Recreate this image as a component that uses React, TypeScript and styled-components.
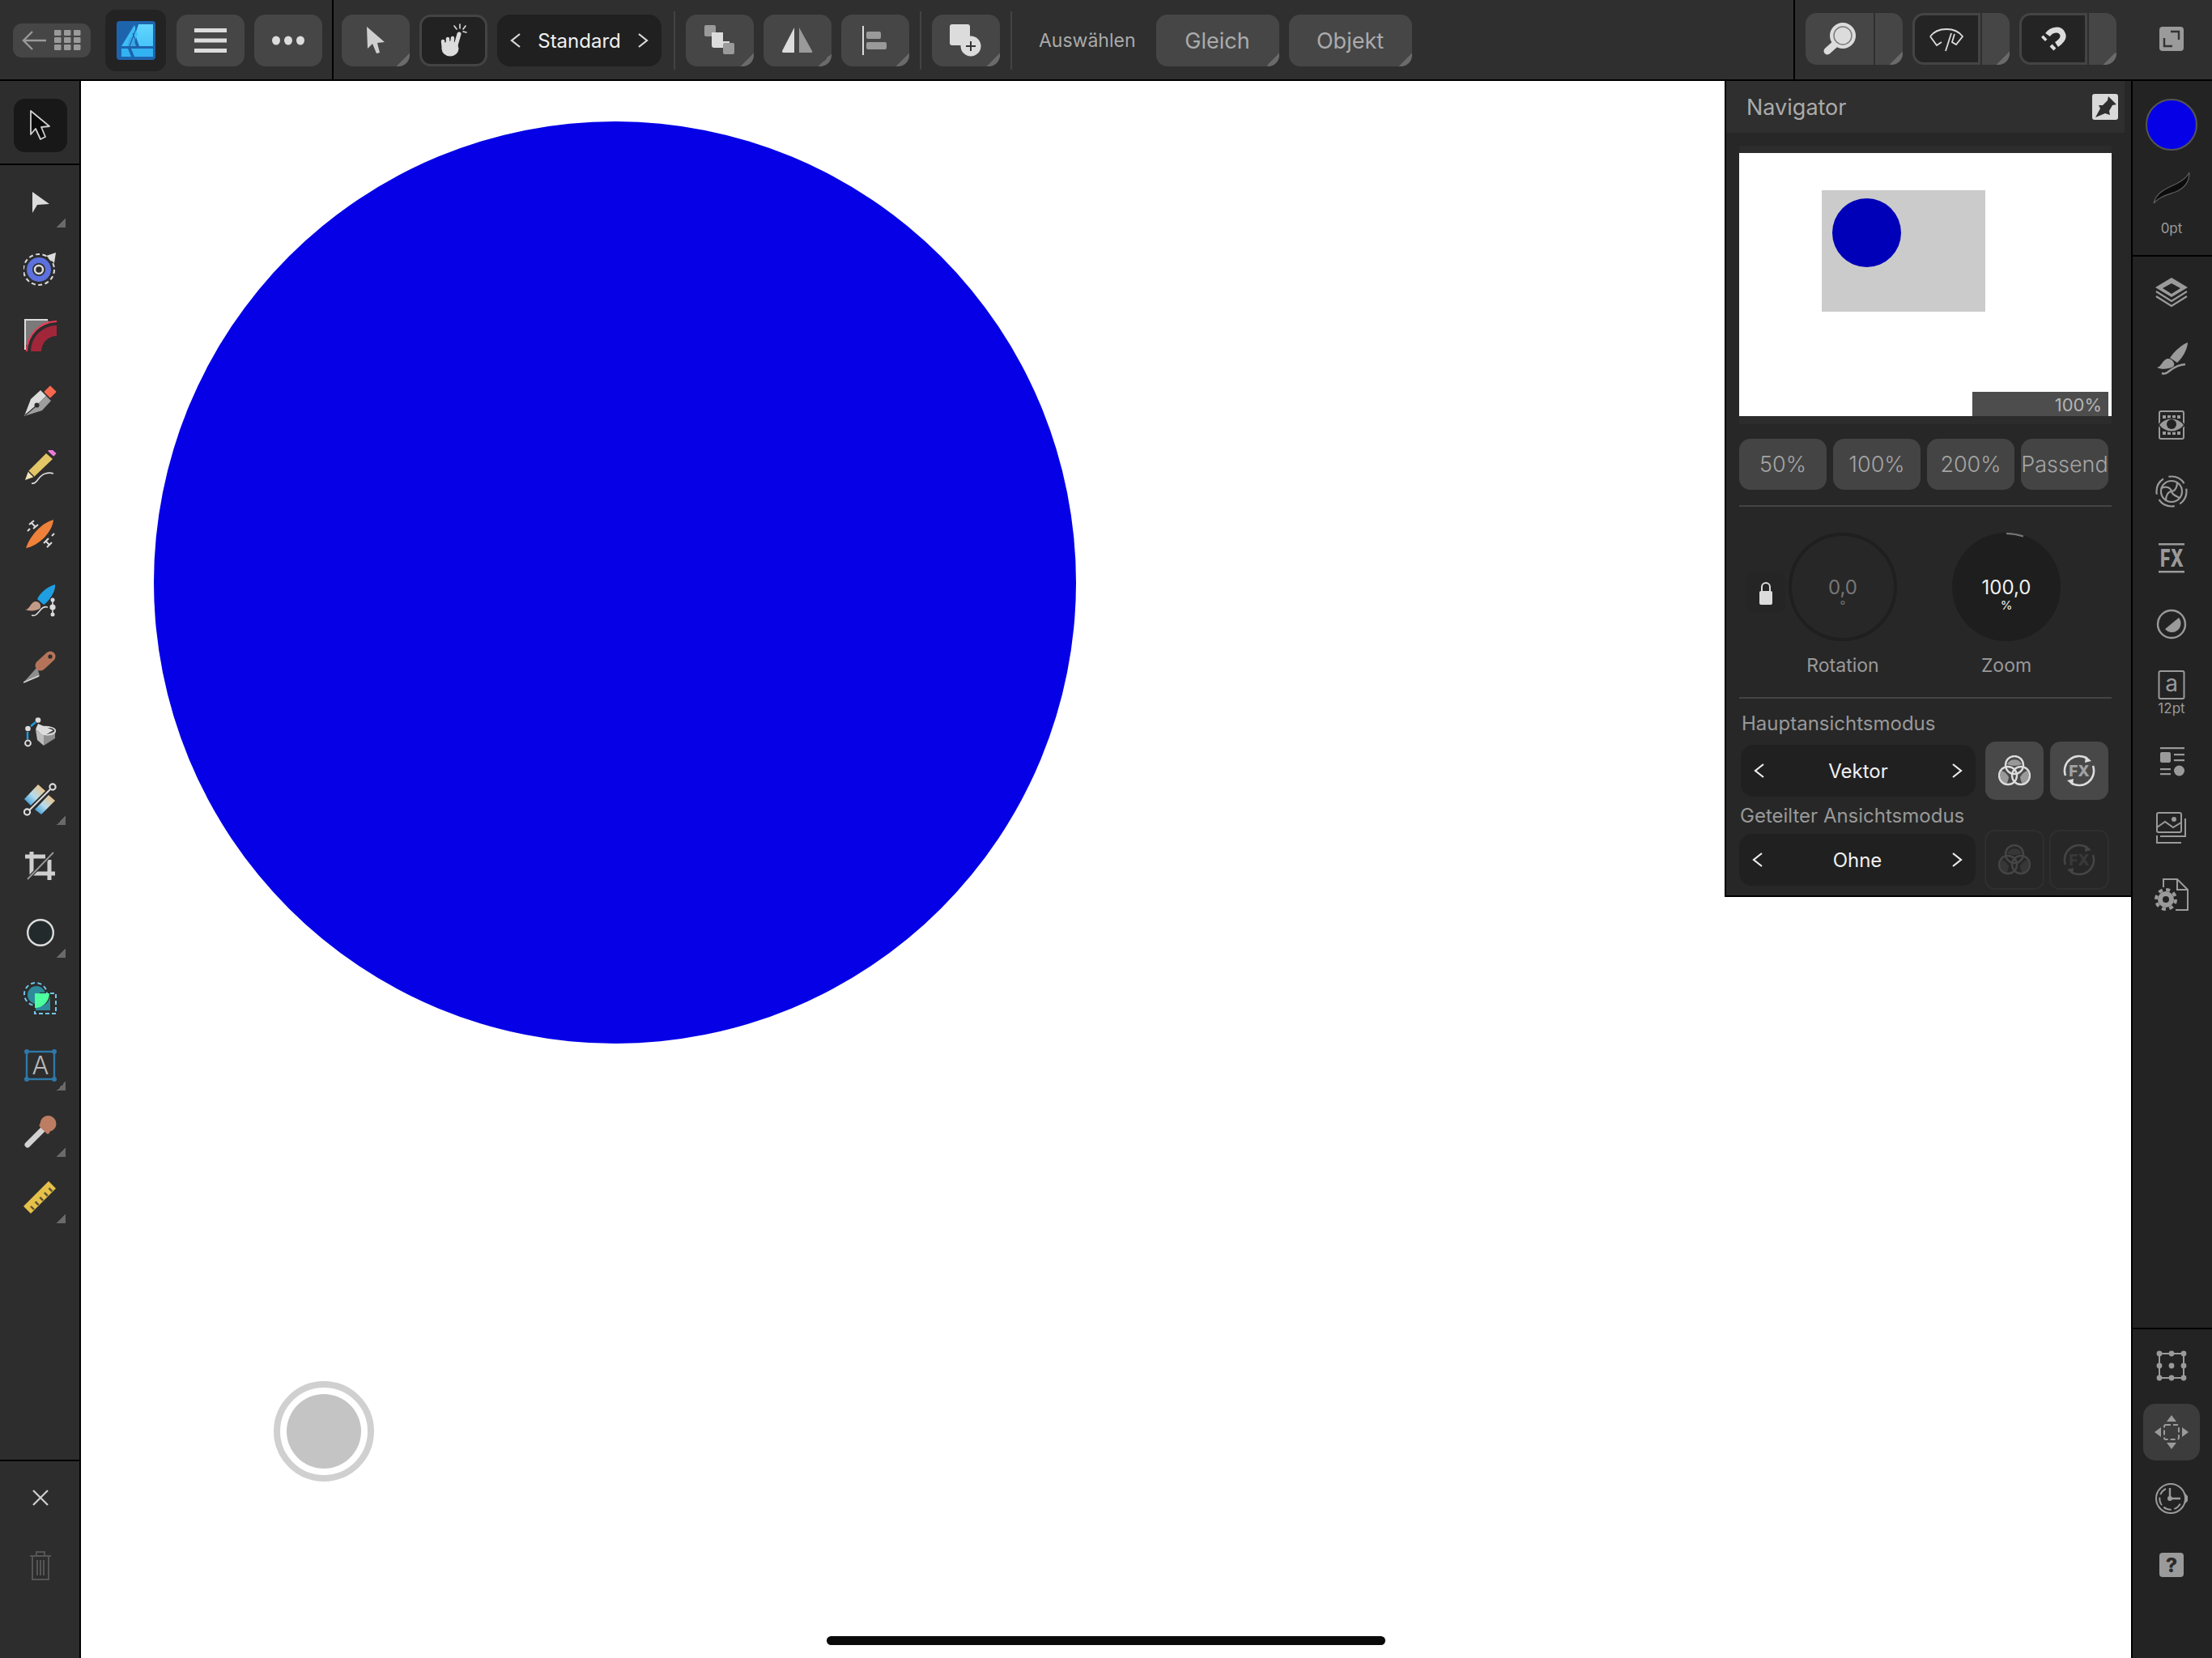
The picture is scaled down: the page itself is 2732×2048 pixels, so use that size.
import React from 'react';
import styled, { createGlobalStyle } from 'styled-components';

const GlobalStyle = createGlobalStyle`
  html, body {
    margin: 0;
    padding: 0;
    width: 2732px;
    height: 2048px;
    overflow: hidden;
    background: #fff;
    font-family: Inter, "Noto Sans", "Liberation Sans", sans-serif;
  }
  * { box-sizing: border-box; }
  svg { display: block; }
`;

const Screen = styled.div`
  display: grid;
  grid-template-columns: 100px 1fr 100px;
  grid-template-rows: 100px 1fr;
  width: 2732px;
  height: 2048px;
`;

/* top bar */
const TopBar = styled.header`
  grid-column: 1 / -1;
  display: flex;
  align-items: stretch;
  background: #2f2f2f;
  border-bottom: 2px solid #000;
`;

const BarSection = styled.div`
  display: flex;
  align-items: center;
  padding-top: 2px;
`;

const HomeGroup = styled(BarSection)`
  padding-left: 16px;
  padding-right: 12px;
  gap: 12px;
  border-right: 2px solid #000;
`;

const MainGroup = styled(BarSection)`
  padding-left: 10px;
  gap: 12px;
`;

const ViewGroup = styled(BarSection)`
  margin-left: auto;
  padding-top: 0;
  padding-bottom: 2px;
  padding-left: 13px;
  padding-right: 35px;
  gap: 12px;
  border-left: 2px solid #000;
`;

const Corner = styled.span<{ $size?: number }>`
  position: absolute;
  right: ${p => (p.$size ? 2 : 0)}px;
  bottom: ${p => (p.$size ? 2 : 0)}px;
  width: ${p => p.$size || 16}px;
  height: ${p => p.$size || 16}px;
  background: linear-gradient(135deg, transparent 50%, #6a6a6a 50%);
`;

const BarButton = styled.div<{ $wide?: boolean }>`
  position: relative;
  flex: none;
  display: flex;
  align-items: center;
  justify-content: center;
  width: ${p => (p.$wide ? 152 : 84)}px;
  height: 64px;
  border-radius: 14px;
  background: #464646;
  color: #ababab;
  font-size: 27px;
  overflow: hidden;
`;

const ToggledButton = styled(BarButton)`
  background: #222;
  border: 3px solid #444;
`;

const BackButton = styled.div`
  width: 96px;
  height: 42px;
  border-radius: 11px;
  background: #464646;
`;

const LogoCell = styled.div`
  display: flex;
  align-items: center;
  justify-content: center;
  width: 75px;
  height: 76px;
  margin: 0 1px 0 6px;
  border-radius: 13px;
  background: #232323;
`;

const Stepper = styled.div<{ $width: number; $size?: number }>`
  flex: none;
  display: flex;
  align-items: center;
  justify-content: space-between;
  width: ${p => p.$width}px;
  height: 64px;
  padding: 0 16px;
  border-radius: 16px;
  background: #202020;
  color: #f0f0f0;
  font-size: ${p => p.$size || 24}px;
`;

const BarRule = styled.div<{ $before?: number; $after?: number }>`
  flex: none;
  align-self: center;
  width: 2px;
  height: 72px;
  margin: 0 ${p => p.$after ?? 1}px 0 ${p => p.$before ?? 1}px;
  background: #434343;
`;

const Caption = styled.span`
  margin: 0 13px 0 21px;
  color: #aaa;
  font-size: 23px;
`;

const SplitButton = styled.div`
  flex: none;
  display: flex;
  gap: 2px;
  width: 120px;
  height: 64px;
`;

const SplitMain = styled.div<{ $on?: boolean }>`
  display: flex;
  align-items: center;
  justify-content: center;
  width: 84px;
  border-radius: 14px 0 0 14px;
  background: ${p => (p.$on ? '#242424' : '#464646')};
  border: ${p => (p.$on ? '3px solid #444' : 'none')};
`;

const SplitArrow = styled.div`
  position: relative;
  width: 34px;
  border-radius: 0 14px 14px 0;
  background: #464646;
  overflow: hidden;
`;

const ExpandButton = styled.div`
  display: flex;
  align-items: center;
  justify-content: center;
  width: 30px;
  height: 30px;
  margin-left: 41px;
  border-radius: 4px;
  background: #9a9a9a;
`;

/* side toolbars */
const LeftBar = styled.aside`
  display: flex;
  flex-direction: column;
  background: #2d2d2d;
  border-right: 2px solid #000;
`;

const ToolSlot = styled.div<{ $on?: boolean }>`
  position: relative;
  flex: none;
  display: flex;
  align-items: center;
  justify-content: center;
  width: 66px;
  height: 66px;
  border-radius: 14px;
  background: ${p => (p.$on ? '#181818' : 'transparent')};
`;

const ToolGroup = styled.div<{ $gap: number; $top: number }>`
  display: flex;
  flex-direction: column;
  align-items: center;
  gap: ${p => p.$gap}px;
  padding-top: ${p => p.$top}px;
  padding-left: 2px;
`;

const ActiveGroup = styled(ToolGroup)`
  padding-bottom: 14px;
  border-bottom: 2px solid #000;
`;

const ActionGroup = styled(ToolGroup)`
  margin-top: auto;
  padding-bottom: 81px;
  border-top: 2px solid #000;
`;

const RightBar = styled.aside`
  display: flex;
  flex-direction: column;
  background: #232323;
  border-left: 2px solid #000;
`;

const StyleGroup = styled.div`
  display: flex;
  flex-direction: column;
  align-items: center;
  height: 217px;
  padding: 22px 2px 0 0;
  border-bottom: 2px solid #000;
`;

const Swatch = styled.div`
  width: 64px;
  height: 64px;
  border-radius: 50%;
  background: #0500e6;
  border: 2px solid #555;
`;

const Swoosh = styled.div`
  margin-top: 26px;
`;

const SmallLabel = styled.span<{ $top?: number }>`
  margin-top: ${p => p.$top ?? 0}px;
  color: #9a9a9a;
  font-size: 17px;
  line-height: 18px;
`;

const StudioGroup = styled.div`
  display: flex;
  flex-direction: column;
  align-items: center;
  gap: 16px;
  padding: 11px 2px 0 0;
`;

const StudioSlot = styled.div<{ $tall?: boolean }>`
  display: flex;
  flex-direction: column;
  align-items: center;
  justify-content: center;
  width: 66px;
  height: ${p => (p.$tall ? 72 : 66)}px;
`;

const ModeGroup = styled.div`
  display: flex;
  flex-direction: column;
  align-items: center;
  gap: 12px;
  margin-top: auto;
  padding: 10px 2px 80px 0;
  border-top: 2px solid #000;
`;

const ModeSlot = styled.div<{ $on?: boolean }>`
  display: flex;
  align-items: center;
  justify-content: center;
  width: 70px;
  height: 70px;
  border-radius: 15px;
  background: ${p => (p.$on ? '#3c3c3c' : 'transparent')};
`;

const HelpBadge = styled.div`
  display: flex;
  align-items: center;
  justify-content: center;
  width: 30px;
  height: 30px;
  border-radius: 4px;
  background: #9a9a9a;
  color: #2a2a2a;
  font-size: 25px;
  font-weight: 800;
`;

/* canvas */
const Canvas = styled.main`
  position: relative;
  background: #fff;
  overflow: hidden;
`;

const BigCircle = styled.div`
  position: absolute;
  left: 90px;
  top: 50px;
  width: 1139px;
  height: 1139px;
  border-radius: 50%;
  background: #0500e6;
`;

const TouchRing = styled.div`
  position: absolute;
  left: 238px;
  top: 1606px;
  width: 124px;
  height: 124px;
  padding: 8px;
  border: 8px solid #d0d0d0;
  border-radius: 50%;
`;

const TouchDot = styled.div`
  width: 100%;
  height: 100%;
  border-radius: 50%;
  background: #c4c4c4;
`;

const HomeBar = styled.div`
  position: absolute;
  left: 921px;
  bottom: 16px;
  width: 690px;
  height: 11px;
  border-radius: 6px;
  background: #0a0a0a;
`;

/* navigator studio */
const Panel = styled.section`
  position: absolute;
  top: 0;
  right: 0;
  width: 502px;
  padding-bottom: 7px;
  background: #272727;
  border-left: 2px solid #000;
  border-bottom: 2px solid #000;
`;

const PanelHeader = styled.div`
  display: flex;
  align-items: center;
  justify-content: space-between;
  height: 64px;
  margin-right: 8px;
  padding: 0 8px 0 25px;
  background: #2f2f2f;
  color: #ababab;
  font-size: 27px;
`;

const PinButton = styled.div`
  width: 32px;
  height: 32px;
  border-radius: 3px;
  background: #d9d9d9;
`;

const PanelBody = styled.div`
  display: flex;
  flex-direction: column;
  padding: 16px 24px 0 16px;
`;

const PreviewFrame = styled.div`
  height: 344px;
  padding: 9px 0 10px;
  background: #2c2c2c;
`;

const PreviewPage = styled.div`
  position: relative;
  height: 100%;
  background: #fff;
`;

const PreviewDoc = styled.div`
  position: absolute;
  left: 102px;
  top: 46px;
  width: 202px;
  height: 150px;
  background: #cbcbcb;
`;

const PreviewDisc = styled.div`
  position: absolute;
  left: 13px;
  top: 10px;
  width: 85px;
  height: 85px;
  border-radius: 50%;
  background: #0000b8;
`;

const ZoomTag = styled.div`
  position: absolute;
  right: 4px;
  bottom: 0;
  width: 168px;
  height: 30px;
  padding-right: 8px;
  background: #4d4d4d;
  color: #b4b4b4;
  font-size: 22px;
  line-height: 32px;
  text-align: right;
`;

const PresetRow = styled.div`
  display: grid;
  grid-template-columns: repeat(4, 108px);
  gap: 8px;
  margin-top: 18px;
`;

const Preset = styled.div`
  display: flex;
  align-items: center;
  justify-content: center;
  height: 63px;
  border-radius: 14px;
  background: #444;
  color: #a4a4a4;
  font-size: 27px;
  font-weight: 300;
  white-space: nowrap;
`;

const Rule = styled.div<{ $top: number }>`
  height: 2px;
  margin-top: ${p => p.$top}px;
  background: #444;
`;

const DialRow = styled.div`
  display: flex;
  align-items: flex-start;
  margin-top: 32px;
  padding-left: 8px;
`;

const LockButton = styled.div`
  display: flex;
  align-items: center;
  justify-content: center;
  width: 49px;
  height: 50px;
  margin: 49px 4px 0 0;
  border-radius: 10px;
  background: #252525;
`;

const DialColumn = styled.div<{ $after?: number }>`
  display: flex;
  flex-direction: column;
  align-items: center;
  width: 134px;
  margin-right: ${p => p.$after || 0}px;
`;

const Dial = styled.div<{ $filled?: boolean }>`
  position: relative;
  display: flex;
  flex-direction: column;
  align-items: center;
  width: 134px;
  height: 134px;
  padding-top: ${p => (p.$filled ? 53 : 49)}px;
  border-radius: 50%;
  background: ${p => (p.$filled ? '#1e1e1e' : 'transparent')};
  border: ${p => (p.$filled ? 'none' : '4px solid #1f1f1f')};
  color: ${p => (p.$filled ? '#f0f0f0' : '#777')};
  font-size: 24px;
  line-height: 30px;
`;

const DialUnit = styled.span`
  font-size: 15px;
  line-height: 14px;
`;

const DialArc = styled.svg`
  position: absolute;
  inset: 0;
`;

const DialLabel = styled.span`
  margin-top: 16px;
  color: #999;
  font-size: 23px;
  line-height: 28px;
`;

const ModeLabel = styled.div<{ $left: number; $top: number }>`
  margin: ${p => p.$top}px 0 0 ${p => p.$left}px;
  color: #999;
  font-size: 24px;
  line-height: 30px;
`;

const ModeRow = styled.div<{ $top: number; $left?: number; $gap: number }>`
  display: flex;
  align-items: center;
  gap: ${p => p.$gap}px;
  margin-top: ${p => p.$top}px;
  padding-left: ${p => p.$left || 0}px;
`;

const ModeStepper = styled.div<{ $after: number }>`
  flex: none;
  margin-right: ${p => p.$after}px;
`;

const ModeToggle = styled.div<{ $off?: boolean }>`
  flex: none;
  display: flex;
  align-items: center;
  justify-content: center;
  width: ${p => (p.$off ? 74 : 72)}px;
  height: ${p => (p.$off ? 74 : 72)}px;
  border-radius: 13px;
  background: ${p => (p.$off ? 'transparent' : '#484848')};
  border: ${p => (p.$off ? '2px solid #2f2f2f' : 'none')};
  color: ${p => (p.$off ? '#454545' : '#dcdcdc')};
`;

/* drawings */
const G = '#9a9a9a';
const L = '#dcdcdc';

const Chevron = ({ left, color = '#dcdcdc' }: { left?: boolean; color?: string }) => (
  <svg width="14" height="20" viewBox="0 0 14 20" fill="none" stroke={color} strokeWidth="2.2">
    <path d={left ? 'M12 2 L2 10 L12 18' : 'M2 2 L12 10 L2 18'} />
  </svg>
);

const BackIcon = () => (
  <svg width="96" height="42" viewBox="0 0 96 42" fill="none">
    <path d="M41 21 H14 M24 10 L13 21 L24 32" stroke={G} strokeWidth="2.4" />
    {[0, 1, 2].map(r =>
      [0, 1, 2].map(c => <rect key={`${r}${c}`} x={51 + c * 12} y={8 + r * 9} width="8.5" height="7" rx="1" fill={G} />)
    )}
  </svg>
);

const AffinityLogo = () => (
  <svg width="48" height="48" viewBox="0 0 48 48">
    <defs>
      <linearGradient id="afTop" x1="0" y1="0" x2="0" y2="1">
        <stop offset="0" stopColor="#63d6fd" />
        <stop offset="1" stopColor="#48c4fa" />
      </linearGradient>
    </defs>
    <rect width="48" height="48" rx="4" fill="#1e64ad" />
    <polygon points="27,4 45,4 45,31 28,31 23,17" fill="url(#afTop)" />
    <polygon points="22,5 26,16 20,31 6,31" fill="#3dbdf5" />
    <polygon points="16,22 20,18 24,31 13,31" fill="#3aa7e6" />
    <polygon points="18,34 45,34 45,44 22,44" fill="#33b2f2" />
    <polygon points="6,34 14,34 18,44 6,44" fill="#33b2f2" />
    <path d="M26 4 L16 31 M20 15 L26 31" stroke="#1e64ad" strokeWidth="1.2" fill="none" />
  </svg>
);

const MenuIcon = () => (
  <svg width="40" height="30" viewBox="0 0 40 30" fill={L}>
    <rect y="0" width="40" height="5" />
    <rect y="12.5" width="40" height="5" />
    <rect y="25" width="40" height="5" />
  </svg>
);

const DotsIcon = () => (
  <svg width="40" height="12" viewBox="0 0 40 12" fill={L}>
    <ellipse cx="5" cy="6" rx="5" ry="5.5" />
    <ellipse cx="20" cy="6" rx="5" ry="5.5" />
    <ellipse cx="35" cy="6" rx="5" ry="5.5" />
  </svg>
);

const CursorIcon = () => (
  <svg width="24" height="34" viewBox="0 0 24 34" fill="#cfcfcf">
    <polygon points="1,0 23,19 14,20 17,32 13,33 8,21 2,27" />
  </svg>
);

const TouchIcon = () => (
  <svg width="38" height="42" viewBox="0 0 38 42" fill="none" stroke={L} strokeLinecap="round">
    <path d="M26 13 L22 27" strokeWidth="5" />
    <path d="M18 18 L17 28 M12 19 L12 29 M6 22 L7 31" strokeWidth="4.5" />
    <ellipse cx="15" cy="31" rx="10.5" ry="9.5" fill={L} stroke="none" />
    <path d="M27 1 L27 6 M20 3 L23 7 M34 3 L31 7 M35 11 L31 10" strokeWidth="1.6" />
  </svg>
);

const OrderIcon = () => (
  <svg width="38" height="38" viewBox="0 0 38 38">
    <rect x="0" y="0" width="14" height="14" rx="2" fill={G} />
    <path d="M9 9 H23 V20 H31 V28 H12 Q9 28 9 25Z" fill={L} />
    <rect x="23" y="22" width="14" height="14" rx="2" fill={G} />
  </svg>
);

const FlipIcon = () => (
  <svg width="38" height="32" viewBox="0 0 38 32">
    <path d="M15 0 V31 H1 Q0 31 0 29Z" fill={L} />
    <path d="M21 0 V31 H36 Q38 31 37 29Z" fill={G} />
  </svg>
);

const AlignIcon = () => (
  <svg width="32" height="36" viewBox="0 0 32 36">
    <rect x="0" y="0" width="2" height="36" fill={L} />
    <rect x="5" y="7" width="18" height="9" rx="2" fill={G} />
    <rect x="5" y="20" width="25" height="9" rx="2" fill={G} />
  </svg>
);

const AddShapeIcon = () => (
  <svg width="40" height="40" viewBox="0 0 40 40">
    <rect x="0" y="0" width="25" height="26" rx="3" fill={L} />
    <circle cx="26" cy="27" r="12.5" fill={L} />
    <path d="M26 21 V33 M20 27 H32" stroke="#333" strokeWidth="2" />
  </svg>
);

const LensIcon = () => (
  <svg width="42" height="42" viewBox="0 0 42 42">
    <path d="M6 36 L16 27" stroke={L} strokeWidth="9" strokeLinecap="round" />
    <circle cx="25" cy="17" r="16" fill={L} />
    <circle cx="25" cy="17" r="11" fill={L} stroke="#7c7c7c" strokeWidth="1.5" />
  </svg>
);

const WiperIcon = () => (
  <svg width="42" height="32" viewBox="0 0 42 32" fill="none" stroke={L} strokeWidth="1.8">
    <path d="M1 13 C10 1 32 1 41 13 L33 23 L28 20 L31 10 M15 20 L9 24 L1 13" />
    <path d="M20 31 L27 9" />
  </svg>
);

const MagnetIcon = () => (
  <svg width="32" height="32" viewBox="0 0 32 32" fill="none" stroke={L} strokeWidth="7">
    <path d="M9 11 C14 4 24 3 27 9 C30 14 26 19 20 23" />
    <path d="M3.5 16.5 L6 14 M14 28 L17 25" />
  </svg>
);

const ExpandIcon = () => (
  <svg width="22" height="22" viewBox="0 0 22 22" fill="none" stroke="#333" strokeWidth="2.4">
    <path d="M10 2 H20 V12 M2 10 V20 H12" />
  </svg>
);

const PinIcon = () => (
  <svg width="32" height="32" viewBox="0 0 32 32" fill="#2e2e2e">
    <path d="M20 3 L30 13 L25 14 L21 21 L22 26 L16 24 L4 29 L10 18 L8 14 L13 14 L19 8Z" />
  </svg>
);

const LockIcon = () => (
  <svg width="16" height="29" viewBox="0 0 16 29">
    <path d="M3 13 V7 A5 5 0 0 1 13 7 V13" fill="none" stroke={L} strokeWidth="2" />
    <rect y="12" width="16" height="17" rx="2" fill={L} />
  </svg>
);

const ChannelsIcon = () => (
  <svg width="40" height="38" viewBox="0 0 40 38" fill="none" stroke="currentColor" strokeWidth="2.4">
    <path d="M11 11 A10 10 0 0 1 29 11 Q20 15 11 11Z" fill="currentColor" opacity="0.55" stroke="none" />
    <path d="M4 19 Q10 21 13 27 Q12 33 10 35 Q2 33 2 26Z" fill="currentColor" opacity="0.55" stroke="none" />
    <path d="M36 19 Q30 21 27 27 Q28 33 30 35 Q38 33 38 26Z" fill="currentColor" opacity="0.55" stroke="none" />
    <circle cx="20" cy="12" r="11" />
    <circle cx="12" cy="25" r="11" />
    <circle cx="28" cy="25" r="11" />
  </svg>
);

const FxRoundIcon = () => (
  <svg width="40" height="40" viewBox="0 0 40 40" fill="none" stroke="currentColor" strokeWidth="2.6">
    <path d="M30 5 A18 18 0 0 0 3 26 M10 35 A18 18 0 0 0 37 14" />
    <polygon points="28,2 35,8 27,10" fill="currentColor" stroke="none" />
    <polygon points="12,38 5,32 13,30" fill="currentColor" stroke="none" />
    <text x="20" y="27" textAnchor="middle" fontFamily="Inter, sans-serif" fontWeight="800" fontSize="19" fill="currentColor" stroke="none" opacity="0.6">FX</text>
  </svg>
);

const SwooshIcon = () => (
  <svg width="46" height="40" viewBox="0 0 46 40">
    <path d="M1 39 C4 26 16 21 29 15 C37 11 42 7 45 1 C45 13 38 21 28 25 C17 29 8 31 1 39Z" fill="#0c0c0c" stroke="#5e5e5e" strokeWidth="1.2" />
  </svg>
);

const ArrowTool = () => (
  <svg width="30" height="40" viewBox="0 0 30 40">
    <polygon points="3,2 26,21 16,22 21,34 15,37 9,24 3,31" fill="#0a0a0a" stroke="#cfcfcf" strokeWidth="1.8" strokeLinejoin="round" />
  </svg>
);

const MoveTool = () => (
  <svg width="40" height="40" viewBox="0 0 40 40">
    <polygon points="10,7 31,22 16,23 10,33" fill={L} />
  </svg>
);

const NodeTool = () => (
  <svg width="42" height="42" viewBox="0 0 42 42" fill="none">
    <circle cx="19" cy="22" r="19" stroke={L} strokeWidth="2" strokeDasharray="5 3.5" />
    <circle cx="19" cy="22" r="15" fill="#5c71de" />
    <circle cx="19" cy="22" r="8" fill="#2d2d2d" />
    <circle cx="19" cy="22" r="5" stroke={L} strokeWidth="2.5" />
    <polygon points="28,5 40,1 38,14" fill={L} />
  </svg>
);

const CornerTool = () => (
  <svg width="40" height="40" viewBox="0 0 40 40">
    <path d="M1 38 V1 H29" fill="none" stroke={L} strokeWidth="2" />
    <rect x="2" y="2" width="28" height="30" fill="#7a7a7a" />
    <path d="M4 40 A36 36 0 0 1 40 4 V40Z" fill="#2d2d2d" />
    <path d="M8 40 A32 32 0 0 1 40 8 V21 A19 19 0 0 0 21 40Z" fill="#a2263a" />
    <path d="M3 40 A37 37 0 0 1 40 3" fill="none" stroke="#f03a55" strokeWidth="2" />
  </svg>
);

const PenTool = () => (
  <svg width="40" height="40" viewBox="0 0 40 40">
    <polygon points="0,38 8,17 20,6 27,13 15,25" fill="#dcdcdc" />
    <polygon points="0,38 15,25 27,13 33,19 22,31" fill="#9d9d9d" />
    <rect x="26.5" y="2.5" width="11" height="11" rx="1" transform="rotate(45 32 8)" fill="#f5684e" />
    <path d="M1 37 L15 25" stroke="#2d2d2d" strokeWidth="1.2" />
    <circle cx="15.5" cy="24.5" r="3" fill="#2d2d2d" />
  </svg>
);

const PencilTool = () => (
  <svg width="40" height="44" viewBox="0 0 40 44" fill="none">
    <polygon points="27,4 35,11 12,33 5,26" fill="#e3c766" />
    <polygon points="5,26 12,33 1,37" fill="#f3e3b5" />
    <path d="M5 26 L12 33" stroke="#2d2d2d" strokeWidth="1.5" />
    <rect x="29" y="0" width="10" height="5" rx="1" transform="rotate(42 34 3)" fill="#ec7bd8" />
    <path d="M9 41 C16 43 17 31 26 29 C29 28 33 28 36 29" stroke={L} strokeWidth="1.6" />
  </svg>
);

const VectorBrushTool = () => (
  <svg width="38" height="36" viewBox="0 0 38 36" fill="none" stroke={L} strokeWidth="2">
    <path d="M35 0 C34 14 18 32 1 35 C6 20 20 4 35 0Z" fill="#f0813a" stroke="none" />
    <path d="M8 4 L13 9 M5 6 L11 1 M10 11 L16 6 M3 14 L6 11" />
    <path d="M26 27 L30 31 M23 29 L29 23 M27 34 L33 28 M33 20 L36 17" />
  </svg>
);

const PaintBrushTool = () => (
  <svg width="40" height="42" viewBox="0 0 40 42" fill="none">
    <path d="M38 1 C39 10 30 22 24 26 L16 19 C20 10 30 3 38 1Z" fill="#1f9fe2" />
    <path d="M1 32 C7 32 7 24 13 22 C19 21 22 27 19 31 C14 34 6 34 1 32Z" fill="#c49a86" />
    <path d="M9 39 C18 42 19 26 29 29" stroke={L} strokeWidth="1.6" />
    <path d="M35 20 V38" stroke={L} strokeWidth="1.6" />
    <circle cx="35" cy="20" r="2.5" fill={L} />
    <circle cx="35" cy="29" r="3.6" fill={L} />
    <circle cx="35" cy="38" r="2.5" fill={L} />
  </svg>
);

const KnifeTool = () => (
  <svg width="42" height="42" viewBox="0 0 42 42" fill="none">
    <polygon points="0,40 17,21 20,32" fill="#8d8d8d" />
    <path d="M0 40 L19 32" stroke={L} strokeWidth="1.5" />
    <path d="M33 8 L21 19" stroke="#b5745a" strokeWidth="13" strokeLinecap="round" />
    <circle cx="33" cy="8" r="2.6" fill="#2d2d2d" />
  </svg>
);

const BucketTool = () => (
  <svg width="40" height="40" viewBox="0 0 40 40" fill="none">
    <path d="M4 18 V27 M8 11 L14 6" stroke="#1f9fe2" strokeWidth="2.4" />
    <polygon points="17,8 36,16 24,23 14,15" fill={L} />
    <polygon points="14,15 24,23 24,35 16,28" fill="#bcbcbc" />
    <polygon points="24,23 38,17 38,26 24,35" fill="#8f8f8f" />
    <path d="M15 13 C30 10 40 13 38 18 C36 22 25 23 20 19" stroke={L} strokeWidth="1.8" />
    <circle cx="17" cy="3.5" r="3.3" fill={L} />
    <circle cx="4.5" cy="14" r="3.3" fill={L} />
    <circle cx="4.5" cy="32" r="3.4" stroke={L} strokeWidth="2" />
  </svg>
);

const GradientTool = () => (
  <svg width="42" height="42" viewBox="0 0 42 42" fill="none">
    <defs>
      <linearGradient id="gradFill" x1="1" y1="0" x2="0" y2="1">
        <stop offset="0.15" stopColor="#e7c48f" />
        <stop offset="0.55" stopColor="#b6dcee" />
        <stop offset="0.9" stopColor="#3f9dd6" />
      </linearGradient>
    </defs>
    <polygon points="1,20 18,2 27,10 9,28" fill="url(#gradFill)" />
    <polygon points="14,33 31,15 39,22 22,39" fill="url(#gradFill)" />
    <path d="M7 34 L33 8" stroke="#2d2d2d" strokeWidth="5" />
    <path d="M7 34 L33 8" stroke={L} strokeWidth="2" />
    <circle cx="36" cy="5" r="3.6" fill="#2d2d2d" stroke={L} strokeWidth="2.2" />
    <circle cx="4.5" cy="36" r="3.6" fill="#2d2d2d" stroke={L} strokeWidth="2.2" />
  </svg>
);

const CropTool = () => (
  <svg width="38" height="38" viewBox="0 0 38 38" fill="none">
    <path d="M0 7 H25 M8 1 V30 M30 11 V36 M8 28 H37" stroke="#cfcfcf" strokeWidth="5" />
    <path d="M3 35 L35 2" stroke="#2d2d2d" strokeWidth="4" />
    <path d="M3 35 L35 2" stroke="#9a9a9a" strokeWidth="1.8" />
  </svg>
);

const EllipseTool = () => (
  <svg width="36" height="36" viewBox="0 0 36 36">
    <circle cx="18" cy="18" r="15.8" fill="#232a2c" stroke={L} strokeWidth="2.4" />
  </svg>
);

const ShapeBuilderTool = () => (
  <svg width="42" height="42" viewBox="0 0 42 42" fill="none">
    <circle cx="16" cy="16" r="11" fill="#2d8b9b" />
    <path d="M20 13 H37 V37 H15Z" fill="#2d2d2d" />
    <path d="M33 17 V35 H15 V31 C24 31 32 26 33 17Z" fill="#2d8b9b" />
    <circle cx="15" cy="15" r="14" stroke="#70c6ea" strokeWidth="2" strokeDasharray="5 3.5" />
    <path d="M33 14 H40 V39 H14 V33" stroke="#70c6ea" strokeWidth="2" strokeDasharray="5 3" />
    <path d="M14 14 H32 A18 18 0 0 1 14 32Z" fill="#4dff9e" />
  </svg>
);

const TextFrameTool = () => (
  <svg width="40" height="40" viewBox="0 0 40 40" fill="none">
    <rect x="3" y="3" width="34" height="34" stroke="#2f78a8" strokeWidth="2.4" />
    {[[3, 3], [37, 3], [3, 37], [37, 37]].map(([x, y]) => (
      <circle key={`${x}${y}`} cx={x} cy={y} r="3" fill="#2f78a8" />
    ))}
    <text x="20" y="31" textAnchor="middle" fontFamily="Inter, sans-serif" fontWeight="300" fontSize="31" fill="#b9b9b9">A</text>
  </svg>
);

const DropperTool = () => (
  <svg width="42" height="42" viewBox="0 0 42 42" fill="none">
    <path d="M5 37 L24 18" stroke="#d2d2d2" strokeWidth="7" strokeLinecap="round" />
    <path d="M22 13 L30 21" stroke="#bd7d62" strokeWidth="5" strokeLinecap="round" />
    <circle cx="30.5" cy="11" r="10" fill="#bd7d62" />
  </svg>
);

const RulerTool = () => (
  <svg width="42" height="44" viewBox="0 0 42 44">
    <polygon points="0,32 31,1 40,10 9,41" fill="#e5c14a" strokeLinejoin="round" />
    {[0, 1, 2, 3, 4].map(i => (
      <path key={i} d={`M${9 + i * 5.6} ${32 - i * 5.6} l4 4`} stroke="#5a5232" strokeWidth="2.4" />
    ))}
  </svg>
);

const CloseIcon = () => (
  <svg width="22" height="22" viewBox="0 0 22 22" stroke="#cfcfcf" strokeWidth="2.2">
    <path d="M2 2 L20 20 M20 2 L2 20" />
  </svg>
);

const TrashIcon = () => (
  <svg width="28" height="38" viewBox="0 0 28 38" fill="none" stroke="#555" strokeWidth="2">
    <path d="M1 7 H27 M9 7 V2 H19 V7 M4 7 V36 H24 V7 M10 12 V31 M14 12 V31 M18 12 V31" />
  </svg>
);

const LayersIcon = () => (
  <svg width="40" height="40" viewBox="0 0 40 40" fill="none" stroke={G} strokeWidth="2.2">
    <path d="M20 2 L40 14 L20 26 L0 14Z" fill={G} stroke="none" />
    <path d="M20 9 L31 15 L20 22 L9 15Z" fill="#232323" stroke="none" />
    <path d="M1 19 L20 31 L39 19 M1 25 L20 37 L39 25" />
  </svg>
);

const BrushStudioIcon = () => (
  <svg width="40" height="40" viewBox="0 0 40 40" fill="none">
    <path d="M40 0 C40 8 33 20 27 25 L18 19 C24 10 34 2 40 0Z" fill={G} />
    <path d="M2 31 C8 30 8 22 15 20 C20 19 26 26 22 30 C16 33 8 34 2 31Z" fill={G} />
    <path d="M8 38 C17 41 19 28 37 27" stroke={G} strokeWidth="2.6" />
  </svg>
);

const MaskIcon = () => (
  <svg width="40" height="40" viewBox="0 0 40 40" fill="none">
    <rect x="5" y="3" width="30" height="34" rx="2" stroke={G} strokeWidth="2" />
    <path d="M9 10 H31 M9 30 H31" stroke={G} strokeWidth="4" strokeDasharray="4 2" />
    <path d="M4 20 C12 9 28 9 36 20 C28 31 12 31 4 20Z" fill={G} stroke="#232323" strokeWidth="1.5" />
    <circle cx="20" cy="19" r="6" fill="#232323" />
  </svg>
);

const ToneIcon = () => (
  <svg width="40" height="40" viewBox="0 0 40 40" fill="none" stroke={G} strokeWidth="2.2">
    <circle cx="20" cy="20" r="18.5" strokeDasharray="22 7" strokeDashoffset="4" />
    <circle cx="20" cy="20" r="13" />
    <path d="M7.5 16 C13 13 19 15 20 20 C21 25 27 26 30 28 M27 9 C27 15 24 20 20 20 C16 20 13 25 13 31" />
  </svg>
);

const FxIcon = () => (
  <svg width="40" height="40" viewBox="0 0 40 40">
    <rect x="4" y="2" width="32" height="2.5" fill={G} />
    <rect x="4" y="36" width="32" height="2.5" fill={G} />
    <text x="6" y="31" fontFamily="Inter, sans-serif" fontWeight="800" fontSize="30" textLength="29" lengthAdjust="spacingAndGlyphs" fill={G}>FX</text>
  </svg>
);

const AdjustIcon = () => (
  <svg width="40" height="40" viewBox="0 0 40 40" fill="none">
    <circle cx="20" cy="20" r="17" stroke={G} strokeWidth="2.4" />
    <path d="M12 26 L29 12 A11 11 0 0 1 12 26Z" fill={G} />
  </svg>
);

const TextBoxIcon = () => (
  <svg width="34" height="36" viewBox="0 0 34 36" fill="none">
    <rect x="1.5" y="1" width="31" height="34" rx="2" stroke={G} strokeWidth="2" />
    <text x="17" y="26" textAnchor="middle" fontFamily="Inter, sans-serif" fontSize="28" fill={G}>a</text>
  </svg>
);

const AssetsIcon = () => (
  <svg width="40" height="36" viewBox="0 0 40 36" fill={G}>
    <rect x="6" y="0" width="30" height="2.2" />
    <rect x="6" y="6" width="13" height="13" rx="2" />
    <rect x="23" y="8" width="13" height="2.2" />
    <rect x="23" y="15" width="13" height="2.2" />
    <rect x="6" y="26" width="13" height="2.2" />
    <rect x="6" y="32" width="13" height="2.2" />
    <circle cx="29.5" cy="29" r="6.5" />
  </svg>
);

const StockIcon = () => (
  <svg width="40" height="40" viewBox="0 0 40 40" fill="none" stroke={G} strokeWidth="2">
    <rect x="2" y="1" width="30" height="24" rx="2" />
    <path d="M2 19 L12 12 L22 19 L32 13" />
    <circle cx="23" cy="9" r="3" fill={G} stroke="none" />
    <path d="M37 8 V30 H6 M2 29 V38 H32" />
  </svg>
);

const DocGearIcon = () => (
  <svg width="42" height="42" viewBox="0 0 42 42" fill="none" stroke={G} strokeWidth="2">
    <path d="M11 12 V2 H28 L41 15 V40 H26 M28 2 V15 H41" />
    <circle cx="14" cy="27" r="7" strokeWidth="6" />
    <circle cx="14" cy="27" r="12" strokeWidth="4" strokeDasharray="5 4.4" />
  </svg>
);

const TransformIcon = () => (
  <svg width="38" height="38" viewBox="0 0 38 38" fill={G}>
    <rect x="4" y="4" width="30" height="30" fill="none" stroke={G} strokeWidth="2" />
    {[4, 19, 34].map(y =>
      [4, 19, 34].map(x => <circle key={`${x}${y}`} cx={x} cy={y} r="3.4" />)
    )}
  </svg>
);

const MoveModeIcon = () => (
  <svg width="42" height="42" viewBox="0 0 42 42" fill={G}>
    <polygon points="21,0 27,8 15,8" />
    <polygon points="21,42 27,34 15,34" />
    <polygon points="0,21 8,15 8,27" />
    <polygon points="42,21 34,15 34,27" />
    <rect x="12" y="12" width="18" height="18" rx="2" fill="none" stroke={G} strokeWidth="2" strokeDasharray="6 3" />
  </svg>
);

const HistoryIcon = () => (
  <svg width="40" height="40" viewBox="0 0 40 40" fill="none" stroke={G}>
    <circle cx="19" cy="20" r="18" strokeWidth="2" />
    <path d="M13 8 A13.5 13.5 0 1 0 31 26" strokeWidth="2" strokeDasharray="10 3.5" />
    <path d="M18 7 V20 H31" strokeWidth="2.4" />
    <circle cx="18" cy="20" r="3" fill={G} stroke="none" />
    <path d="M37 14 L40 17 V23 L37 26Z" fill={G} stroke="none" />
  </svg>
);

const tools: { icon: React.ReactNode; corner?: boolean }[] = [
  { icon: <MoveTool />, corner: true },
  { icon: <NodeTool /> },
  { icon: <CornerTool /> },
  { icon: <PenTool /> },
  { icon: <PencilTool /> },
  { icon: <VectorBrushTool /> },
  { icon: <PaintBrushTool /> },
  { icon: <KnifeTool /> },
  { icon: <BucketTool /> },
  { icon: <GradientTool />, corner: true },
  { icon: <CropTool /> },
  { icon: <EllipseTool />, corner: true },
  { icon: <ShapeBuilderTool /> },
  { icon: <TextFrameTool />, corner: true },
  { icon: <DropperTool />, corner: true },
  { icon: <RulerTool />, corner: true },
];

const App = () => (
  <Screen>
    <GlobalStyle />
    <TopBar>
      <HomeGroup>
        <BackButton><BackIcon /></BackButton>
        <LogoCell><AffinityLogo /></LogoCell>
        <BarButton><MenuIcon /></BarButton>
        <BarButton><DotsIcon /></BarButton>
      </HomeGroup>
      <MainGroup>
        <BarButton><CursorIcon /><Corner /></BarButton>
        <ToggledButton><TouchIcon /></ToggledButton>
        <Stepper $width={203}>
          <Chevron left />
          <span>Standard</span>
          <Chevron />
        </Stepper>
        <BarRule $before={3} />
        <BarButton><OrderIcon /><Corner /></BarButton>
        <BarButton><FlipIcon /><Corner /></BarButton>
        <BarButton><AlignIcon /><Corner /></BarButton>
        <BarRule />
        <BarButton><AddShapeIcon /><Corner /></BarButton>
        <BarRule $after={0} />
        <Caption>Auswählen</Caption>
        <BarButton $wide>Gleich<Corner /></BarButton>
        <BarButton $wide>Objekt<Corner /></BarButton>
      </MainGroup>
      <ViewGroup>
        <SplitButton>
          <SplitMain><LensIcon /></SplitMain>
          <SplitArrow><Corner /></SplitArrow>
        </SplitButton>
        <SplitButton>
          <SplitMain $on><WiperIcon /></SplitMain>
          <SplitArrow><Corner /></SplitArrow>
        </SplitButton>
        <SplitButton>
          <SplitMain $on><MagnetIcon /></SplitMain>
          <SplitArrow><Corner /></SplitArrow>
        </SplitButton>
        <ExpandButton><ExpandIcon /></ExpandButton>
      </ViewGroup>
    </TopBar>

    <LeftBar>
      <ActiveGroup $gap={0} $top={22}>
        <ToolSlot $on><ArrowTool /></ToolSlot>
      </ActiveGroup>
      <ToolGroup $gap={16} $top={13}>
        {tools.map((tool, i) => (
          <ToolSlot key={i}>
            {tool.icon}
            {tool.corner && <Corner $size={11} />}
          </ToolSlot>
        ))}
      </ToolGroup>
      <ActionGroup $gap={18} $top={12}>
        <ToolSlot><CloseIcon /></ToolSlot>
        <ToolSlot><TrashIcon /></ToolSlot>
      </ActionGroup>
    </LeftBar>

    <Canvas>
      <BigCircle />
      <TouchRing><TouchDot /></TouchRing>
      <HomeBar />
      <Panel>
        <PanelHeader>
          <span>Navigator</span>
          <PinButton><PinIcon /></PinButton>
        </PanelHeader>
        <PanelBody>
          <PreviewFrame>
            <PreviewPage>
              <PreviewDoc><PreviewDisc /></PreviewDoc>
              <ZoomTag>100%</ZoomTag>
            </PreviewPage>
          </PreviewFrame>
          <PresetRow>
            <Preset>50%</Preset>
            <Preset>100%</Preset>
            <Preset>200%</Preset>
            <Preset>Passend</Preset>
          </PresetRow>
          <Rule $top={19} />
          <DialRow>
            <LockButton><LockIcon /></LockButton>
            <DialColumn $after={68}>
              <Dial>
                <span>0,0</span>
                <DialUnit>°</DialUnit>
              </Dial>
              <DialLabel>Rotation</DialLabel>
            </DialColumn>
            <DialColumn>
              <Dial $filled>
                <DialArc width="134" height="134" viewBox="0 0 134 134" fill="none" stroke="#777" strokeWidth="2">
                  <path d="M67 1 A66 66 0 0 1 88 4.5" />
                </DialArc>
                <span>100,0</span>
                <DialUnit>%</DialUnit>
              </Dial>
              <DialLabel>Zoom</DialLabel>
            </DialColumn>
          </DialRow>
          <Rule $top={25} />
          <ModeLabel $left={3} $top={16}>Hauptansichtsmodus</ModeLabel>
          <ModeRow $top={7} $left={2} $gap={8}>
            <ModeStepper $after={4}>
              <Stepper $width={290}>
                <Chevron left color="#eee" />
                <span>Vektor</span>
                <Chevron color="#eee" />
              </Stepper>
            </ModeStepper>
            <ModeToggle><ChannelsIcon /></ModeToggle>
            <ModeToggle><FxRoundIcon /></ModeToggle>
          </ModeRow>
          <ModeLabel $left={1} $top={5}>Geteilter Ansichtsmodus</ModeLabel>
          <ModeRow $top={2} $gap={6}>
            <ModeStepper $after={5}>
              <Stepper $width={292}>
                <Chevron left color="#eee" />
                <span>Ohne</span>
                <Chevron color="#eee" />
              </Stepper>
            </ModeStepper>
            <ModeToggle $off><ChannelsIcon /></ModeToggle>
            <ModeToggle $off><FxRoundIcon /></ModeToggle>
          </ModeRow>
        </PanelBody>
      </Panel>
    </Canvas>

    <RightBar>
      <StyleGroup>
        <Swatch />
        <Swoosh><SwooshIcon /></Swoosh>
        <SmallLabel $top={21}>0pt</SmallLabel>
      </StyleGroup>
      <StudioGroup>
        <StudioSlot><LayersIcon /></StudioSlot>
        <StudioSlot><BrushStudioIcon /></StudioSlot>
        <StudioSlot><MaskIcon /></StudioSlot>
        <StudioSlot><ToneIcon /></StudioSlot>
        <StudioSlot><FxIcon /></StudioSlot>
        <StudioSlot><AdjustIcon /></StudioSlot>
        <StudioSlot $tall>
          <TextBoxIcon />
          <SmallLabel $top={2}>12pt</SmallLabel>
        </StudioSlot>
        <StudioSlot><AssetsIcon /></StudioSlot>
        <StudioSlot><StockIcon /></StudioSlot>
        <StudioSlot><DocGearIcon /></StudioSlot>
      </StudioGroup>
      <ModeGroup>
        <ModeSlot><TransformIcon /></ModeSlot>
        <ModeSlot $on><MoveModeIcon /></ModeSlot>
        <ModeSlot><HistoryIcon /></ModeSlot>
        <ModeSlot><HelpBadge>?</HelpBadge></ModeSlot>
      </ModeGroup>
    </RightBar>
  </Screen>
);

export default App;
